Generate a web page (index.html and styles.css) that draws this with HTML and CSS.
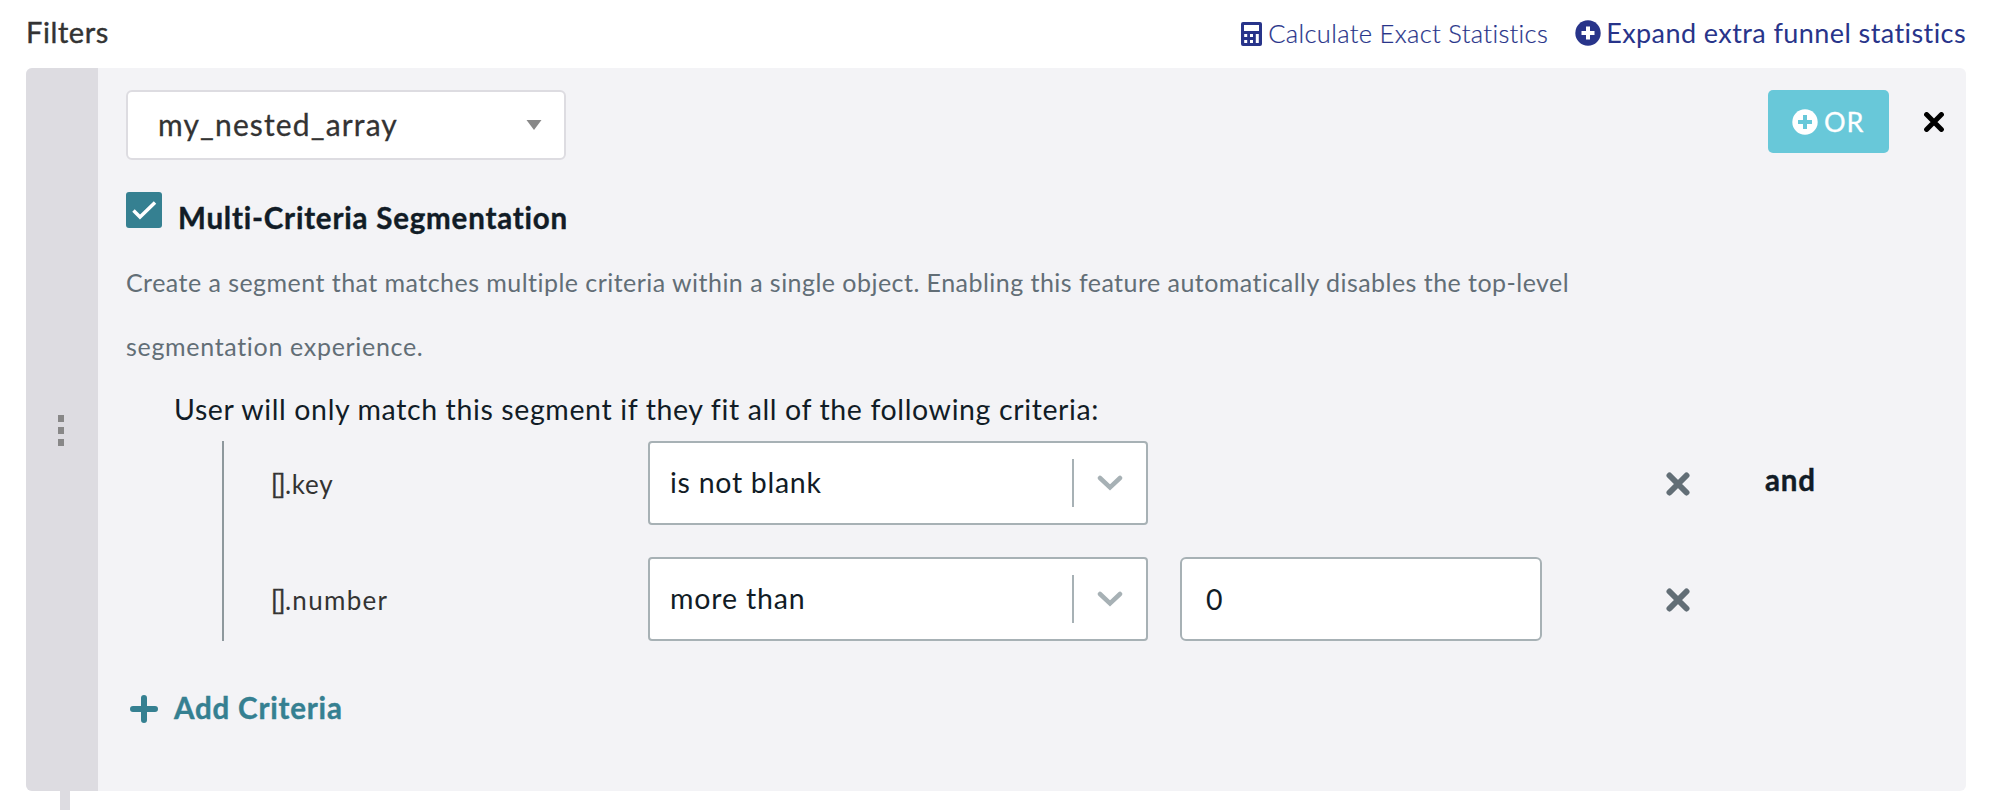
FILE: index.html
```html
<!DOCTYPE html>
<html lang="en">
<head>
<meta charset="utf-8">
<title>Filters</title>
<link rel="stylesheet" href="styles.css">
</head>
<body>
<header class="header">
  <span class="title">Filters</span>
  <nav class="links">
    <a class="calc"><svg class="calc-icon" viewBox="0 0 21 24"><path fill="#28348a" fill-rule="evenodd" d="M2 0H19Q21 0 21 2V22Q21 24 19 24H2Q0 24 0 22V2Q0 0 2 0ZM3 3V9H18V3ZM3.200 12V15H6.200V12ZM9 12V15H12V12ZM14.800 12V21H17.800V12ZM3.200 18V21H6.200V18ZM9 18V21H12V18Z"/></svg><span>Calculate Exact Statistics</span></a>
    <a class="expand"><svg class="plus-icon" viewBox="0 0 26 26"><circle cx="13" cy="13" r="12.700" fill="#28348a"/><path d="M13 6.500V19.500M6.500 13H19.500" stroke="#fff" stroke-width="4"/></svg><span>Expand extra funnel statistics</span></a>
  </nav>
</header>
<main class="panel">
  <div class="grip"><i></i><i></i><i></i></div>
  <section class="content">
    <div class="top">
      <div class="attribute"><span>my_nested_array</span><svg width="16" height="10" viewBox="0 0 16 10"><path d="M.5 0H15.500L8 10Z" fill="#888"/></svg></div>
      <div class="actions">
        <button class="or"><svg class="plus-icon" viewBox="0 0 26 26"><circle cx="13" cy="13" r="12.700" fill="#fff"/><path d="M13 6V20M6 13H20" stroke="#68c8d9" stroke-width="4"/></svg><span>OR</span></button>
        <svg class="close" viewBox="0 0 20 20"><path d="M2.600 2.600L17.400 17.400M17.400 2.600L2.600 17.400" stroke="#000" stroke-width="5" stroke-linecap="round"/></svg>
      </div>
    </div>
    <div class="check-row">
      <span class="checkbox"><svg width="36" height="36" viewBox="0 0 36 36"><path d="M7.500 18.500L14 25L29 10.500" fill="none" stroke="#fff" stroke-width="3.500"/></svg></span>
      <strong>Multi-Criteria Segmentation</strong>
    </div>
    <p class="description">Create a segment that matches multiple criteria within a single object. Enabling this feature automatically disables the top-level <span class="tail">segmentation experience.</span></p>
    <p class="intro">User will only match this segment if they fit all of the following criteria:</p>
    <div class="criteria">
      <div class="criterion">
        <span class="field"><span class="brackets">[]</span>.key</span>
        <div class="select"><span>is not blank</span><svg width="26" height="16" viewBox="0 0 26 16"><path d="M3 3L13 12.500L23 3" fill="none" stroke="#a7b1b5" stroke-width="4.500" stroke-linecap="round"/></svg></div>
        <span></span>
        <svg class="remove" viewBox="0 0 24 26"><path d="M3.500 4.500L20.500 21.500M20.500 4.500L3.500 21.500" stroke="#626e76" stroke-width="6" stroke-linecap="round"/></svg>
        <strong class="and">and</strong>
      </div>
      <div class="criterion">
        <span class="field number"><span class="brackets">[]</span>.number</span>
        <div class="select wide"><span>more than</span><svg width="26" height="16" viewBox="0 0 26 16"><path d="M3 3L13 12.500L23 3" fill="none" stroke="#a7b1b5" stroke-width="4.500" stroke-linecap="round"/></svg></div>
        <div class="value">0</div>
        <svg class="remove" viewBox="0 0 24 26"><path d="M3.500 4.500L20.500 21.500M20.500 4.500L3.500 21.500" stroke="#626e76" stroke-width="6" stroke-linecap="round"/></svg>
      </div>
    </div>
    <div class="add"><svg width="28" height="28" viewBox="0 0 28 28"><path d="M14 3V25M3 14H25" stroke="#358091" stroke-width="6" stroke-linecap="round"/></svg><strong>Add Criteria</strong></div>
  </section>
</main>
<div class="stem"></div>
</body>
</html>
```
FILE: styles.css
```css
* { box-sizing: border-box; }
body { margin: 0; height: 810px; overflow: hidden; background: #fff; font-family: Lato, "Open Sans", sans-serif; color: #111c26; font-variant-ligatures: none; }
p { margin: 0; }
svg { flex: none; }
strong { -webkit-text-stroke: .4px currentColor; }

.header { height: 68px; padding: 0 26px; display: flex; justify-content: space-between; align-items: baseline; white-space: nowrap; }
.title { font-size: 29px; line-height: 64px; letter-spacing: .6px; color: #333; -webkit-text-stroke: .4px currentColor; }
.links { display: flex; align-items: baseline; gap: 27px; color: #28348a; }
.calc { font-size: 25.5px; font-weight: 300; line-height: 62px; letter-spacing: .33px; -webkit-text-stroke: .2px currentColor; }
.expand { font-size: 27px; line-height: 62px; letter-spacing: .42px; }
.calc-icon { width: 21px; height: 24px; margin-right: 6px; vertical-align: -3px; }
.plus-icon { width: 26px; height: 26px; }
.expand .plus-icon { margin-right: 5px; vertical-align: -3px; }

.panel { height: 723px; margin: 0 26px; display: flex; background: #f3f3f6; border-radius: 6px; overflow: hidden; }
.grip { width: 72px; flex: none; background: #dddce1; display: flex; flex-direction: column; align-items: center; justify-content: center; gap: 5px; padding-right: 2px; padding-top: 1px; }
.grip i { width: 6px; height: 7px; background: #888; }
.content { flex: 1; padding: 22px 22px 0 28px; }

.top { display: flex; justify-content: space-between; height: 70px; }
.attribute { width: 440px; height: 70px; border: 2px solid #dddce1; border-radius: 6px; background: #fff; display: flex; align-items: center; justify-content: space-between; padding: 0 22px 0 30px; font-size: 30px; letter-spacing: 1.15px; color: #333; }
.attribute span { padding-bottom: 3px; -webkit-text-stroke: .3px currentColor; }
.actions { display: flex; height: 63px; align-items: center; gap: 35px; }
.or { width: 121px; height: 63px; border: 0; border-radius: 5px; background: #68c8d9; color: #fff; font: 27px Lato, sans-serif; letter-spacing: .8px; -webkit-text-stroke: .3px currentColor; display: flex; align-items: center; padding: 0 0 0 24px; gap: 6px; }
.close { width: 20px; height: 20px; }

.check-row { margin-top: 32px; height: 49px; display: flex; gap: 16px; font-size: 29.5px; line-height: 51px; letter-spacing: .8px; }
.checkbox { width: 36px; height: 36px; border-radius: 3px; background: #358091; line-height: 0; }
.description { margin-top: 9px; width: 1500px; font-size: 25px; line-height: 64px; letter-spacing: .46px; color: #626e76; }
.tail { letter-spacing: .68px; }
.intro { margin: 10px 0 0 48px; font-size: 28.5px; line-height: 42px; letter-spacing: .62px; }

.criteria { margin: 11px 0 0 96px; border-left: 2px solid #8e989d; padding-left: 47px; display: grid; gap: 32px; }
.criterion { display: grid; grid-template-columns: 377px 500px 32px 362px 124px 24px 75px auto; align-items: center; height: 84px; }
.criterion > :nth-child(3) { grid-column: 4; }
.criterion > :nth-child(4) { grid-column: 6; }
.criterion > :nth-child(5) { grid-column: 8; }
.field { font-size: 26px; letter-spacing: .8px; padding-top: 1px; color: #333; }
.number { letter-spacing: 1.3px; }
.brackets { letter-spacing: -1.5px; margin-right: 1px; -webkit-text-stroke: .4px currentColor; }
.select, .value { height: 84px; border: 2px solid #a7b1b5; border-radius: 4px; background: #fff; display: flex; align-items: center; font-size: 28.5px; }
.select { padding: 0 23px 0 20px; letter-spacing: .72px; }
.wide { letter-spacing: .85px; }
.select span { flex: 1; height: 48px; line-height: 47px; border-right: 2px solid #a7b1b5; margin-right: 23px; }
.value { padding: 0 0 1px 24px; border-radius: 6px; }
.remove { width: 24px; height: 26px; margin-top: 1px; }
.and { font-size: 29.5px; letter-spacing: .8px; padding-bottom: 8px; }

.add { margin: 50px 0 0 4px; height: 36px; display: flex; align-items: center; gap: 16px; font-size: 29.5px; letter-spacing: .82px; color: #358091; }
.add strong { padding-bottom: 3px; }
.stem { width: 10px; height: 19px; margin-left: 60px; background: #dddce1; }
```
